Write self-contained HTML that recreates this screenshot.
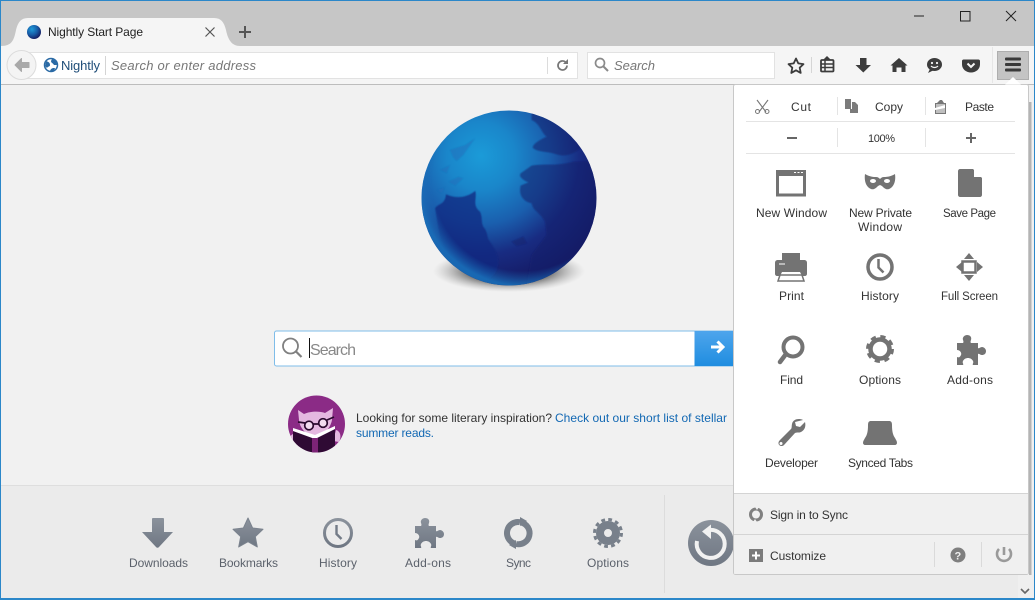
<!DOCTYPE html>
<html lang="en"><head><meta charset="utf-8"><title>Nightly Start Page</title>
<style>
html,body{margin:0;padding:0;width:1035px;height:600px;overflow:hidden;background:#f1f1f1}
svg{display:block}
text{font-family:"Liberation Sans",sans-serif;font-size:12px;fill:#222}
.i{font-style:italic;fill:#777;font-size:13px}
.b{fill:#5b616b;font-size:12px}
.m{fill:#333;font-size:12px}
</style></head><body>
<svg width="1035" height="600" viewBox="0 0 1035 600" xmlns="http://www.w3.org/2000/svg">
<defs>
<radialGradient id="g" cx="34%" cy="26%" r="78%"><stop offset="0" stop-color="#1b9bd8"/><stop offset=".25" stop-color="#1a86ca"/><stop offset=".5" stop-color="#1a5fae"/><stop offset=".72" stop-color="#182c82"/><stop offset="1" stop-color="#15175f"/></radialGradient>
<radialGradient id="rim" cx="58%" cy="40%" r="60%"><stop offset=".86" stop-color="#1a6ab5" stop-opacity="0"/><stop offset="1" stop-color="#1a74bd" stop-opacity=".85"/></radialGradient>
<radialGradient id="sh" cx="50%" cy="50%" r="50%"><stop offset=".55" stop-color="#555" stop-opacity=".8"/><stop offset="1" stop-color="#aaa" stop-opacity="0"/></radialGradient>
<linearGradient id="bi" x1="0" y1="0" x2="0" y2="1"><stop offset="0" stop-color="#8b929c"/><stop offset="1" stop-color="#6f7783"/></linearGradient>
<linearGradient id="go" x1="0" y1="0" x2="0" y2="1"><stop offset="0" stop-color="#4ea5ec"/><stop offset="1" stop-color="#1f8de0"/></linearGradient>
<radialGradient id="fav" cx="35%" cy="30%" r="75%"><stop offset="0" stop-color="#1f9ad8"/><stop offset=".55" stop-color="#175aa5"/><stop offset="1" stop-color="#14185c"/></radialGradient>
<filter id="bl" x="-10%" y="-10%" width="120%" height="120%"><feGaussianBlur stdDeviation="1.200"/></filter>
<clipPath id="cc"><circle cx="316.500" cy="424" r="28.500"/></clipPath>
<clipPath id="gc"><circle cx="509" cy="198" r="87.500"/></clipPath>
<path id="pz" d="M2 8H8C8 8 9 7 8 5C7 2 10 0 12 0C15 0 17 2 16 5C15 7 16 8 16 8H23V13C24 14 25 12 27 12C29 12 31 14 31 16C31 19 29 20 27 20C25 20 24 18 23 19V30H18C17 29 19 28 18 26C17 24 15 23 13 23C11 23 9 24 8 26C7 28 9 29 8 30H2V22C4 23 5 22 6 20C7 18 5 15 2 15Z"/>
</defs>

<!-- window / title -->
<rect width="1035" height="600" fill="#2b87c9"/>
<rect x="1" y="1" width="1033" height="45" fill="#c6c6c6"/>
<rect x="1" y="46" width="1033" height="38" fill="#f5f5f5"/>
<rect x="1" y="84" width="1033" height="1" fill="#bdbdbd"/>
<rect x="1" y="85" width="1033" height="400" fill="#f1f1f1"/>
<rect x="1" y="485" width="1033" height="113" fill="#ebebeb"/>
<rect x="1" y="485" width="1033" height="1" fill="#dedede"/>

<!-- tab -->
<path d="M1 46C12 46 14 40 16 30C18 22 21 18 28 18H214C221 18 224 22 226 30C228 40 232 46 240 46Z" fill="#f5f5f5"/>
<circle cx="34" cy="32" r="7" fill="url(#fav)"/>
<text x="48" y="36" textLength="95" style="font-size:12px">Nightly Start Page</text>
<path d="M205.500 27.500l9 9m0-9l-9 9" stroke="#555" stroke-width="1.200" fill="none"/>
<path d="M239 32h12M245 26v12" stroke="#555" stroke-width="2" fill="none"/>
<!-- window controls -->
<path d="M914 16h10" stroke="#222" stroke-width="1"/>
<rect x="960.500" y="11.500" width="9.500" height="9.500" fill="none" stroke="#222"/>
<path d="M1006 11l10 10m0-10l-10 10" stroke="#222" stroke-width="1" fill="none"/>

<!-- url bar -->
<rect x="22.500" y="52.500" width="555" height="26" fill="#fff" stroke="#e2e2e2"/>
<circle cx="21.500" cy="65" r="14.500" fill="#f4f4f4" stroke="#dcdcdc"/>
<path d="M15 65l6.500-6.500v4h7.500v5h-7.500v4z" fill="#a9a9a9" stroke="#a9a9a9" stroke-linejoin="round"/>
<circle cx="51" cy="65" r="6.500" fill="#fff" stroke="#2a6aa5" stroke-width="1.500"/>
<path d="M46 61c3 1 4 2 4 4s-2 1-3 3l-2-2zM52 59c3 1 5 3 5 6l-3 0c-1-2-3-2-3-4zM50 71c1-3 3-3 5-3l-1 3z" fill="#2a6aa5"/>
<text x="61" y="70" textLength="39" style="fill:#1f4d78;font-size:13px">Nightly</text>
<path d="M105.500 56v19" stroke="#d4d4d4"/>
<text x="111" y="70" textLength="145" class="i">Search or enter address</text>
<path d="M547.500 57v17" stroke="#dcdcdc"/>
<path d="M567 65.500a4.500 4.500 0 1 1-1.300-3.200" fill="none" stroke="#777" stroke-width="1.700"/><path d="M568 59v5h-5z" fill="#777"/>

<!-- search bar -->
<rect x="587.500" y="52.500" width="187" height="26" fill="#fff" stroke="#e2e2e2"/>
<circle cx="600" cy="63" r="4.500" fill="none" stroke="#8a8a8a" stroke-width="1.700"/><path d="M603.500 66.500l4.500 4.500" stroke="#8a8a8a" stroke-width="2"/>
<text x="614" y="70" textLength="41" class="i">Search</text>

<!-- toolbar icons -->
<path d="M796 58.500l2.300 4.900 5.200.7-3.800 3.600 1 5.200-4.700-2.600-4.700 2.600 1-5.200-3.800-3.600 5.200-.7z" fill="none" stroke="#3c3c3c" stroke-width="1.800" stroke-linejoin="round"/>
<path d="M811.500 57v16" stroke="#d5d5d5"/>
<rect x="821" y="60" width="12.500" height="11.500" rx="1" fill="none" stroke="#3c3c3c" stroke-width="1.800"/><path d="M825 59l2-2 2 2zM821 64h12M821 67.500h12M825 60v11" stroke="#3c3c3c" stroke-width="1.500" fill="#3c3c3c"/>
<path d="M860 58h6.500v7h4.500l-7.700 7.500-7.800-7.500h4.500z" fill="#3c3c3c"/>
<path d="M899 58l8.500 7.500h-2v6.500h-4v-4.500h-5v4.500h-4v-6.500h-2z" fill="#3c3c3c"/>
<ellipse cx="934.500" cy="64.500" rx="7.500" ry="6.500" fill="#3c3c3c"/><path d="M930 69l-2 4 5-2.500z" fill="#3c3c3c"/><circle cx="932" cy="63" r="1.100" fill="#f5f5f5"/><circle cx="937" cy="63" r="1.100" fill="#f5f5f5"/><path d="M931 66c2 2 5 2 7 0" fill="none" stroke="#f5f5f5" stroke-width="1.200"/>
<path d="M963.500 59.500h15c.8 0 1.500.7 1.500 1.500v3.500c0 4.500-4 8-9 8s-9-3.500-9-8v-3.500c0-.8.700-1.500 1.500-1.500z" fill="#3c3c3c"/><path d="M967.500 63.500l3.500 3.500 3.500-3.500" fill="none" stroke="#f5f5f5" stroke-width="2"/>
<path d="M992.500 47v36" stroke="#e6e6e6"/>
<rect x="997.500" y="51.500" width="31" height="28" fill="#c4c4c4" stroke="#aeaeae"/>
<rect x="1005" y="57.500" width="16" height="3" rx="1" fill="#3a3a3a"/><rect x="1005" y="63" width="16" height="3" rx="1" fill="#3a3a3a"/><rect x="1005" y="68.500" width="16" height="3" rx="1" fill="#3a3a3a"/>

<!-- globe -->
<ellipse cx="509" cy="271" rx="76" ry="21" fill="url(#sh)"/>
<circle cx="509" cy="198" r="87.500" fill="url(#g)"/>
<g clip-path="url(#gc)"><g transform="translate(400 95) scale(.3333)" filter="url(#bl)">
<path d="M105 340C115 325 135 330 138 298C170 312 200 308 226 288C232 310 215 330 240 350C250 370 240 385 255 402C265 420 260 430 270 440C292 470 305 505 285 535C262 565 225 565 195 540C150 500 120 445 115 400Z" fill="#162a80" opacity=".75"/>
<path d="M395 75C420 85 425 115 440 125C420 135 400 145 398 158C410 172 440 168 470 178C510 190 540 165 560 140L660 100V30H395Z" fill="#15206c" opacity=".55"/>
<path d="M395 212C430 205 470 215 520 200H660V630H370L395 480L440 420L435 380C420 350 400 350 395 325C370 320 355 300 362 272L385 262C370 255 355 245 362 235Z" fill="#15206c" opacity=".55"/>
<path d="M150 165l45-15 30-20-35 50-20 18-10-10zM120 225l30-15-10 25zM145 260l30-15 15 5-25 22zM110 285l25-8-10 18z" fill="#1e6db7" opacity=".45"/>
<path d="M335 440l35-15 10 20-30 8z" fill="#15206c" opacity=".5"/>
</g></g>
<circle cx="509" cy="198" r="87.500" fill="url(#rim)"/>

<!-- search -->
<rect x="274.500" y="331" width="460" height="35" rx="2" fill="#fff" stroke="#7fbde9"/>
<rect x="694.500" y="331" width="40" height="35" fill="url(#go)"/>
<path d="M711 347h11M717.500 341.500l5.500 5.500-5.500 5.500" fill="none" stroke="#fff" stroke-width="3"/>
<circle cx="290.500" cy="346" r="7.500" fill="none" stroke="#808080" stroke-width="1.800"/><path d="M296 351.500l5.500 5.500" stroke="#808080" stroke-width="2.200"/>
<path d="M309.500 338v20" stroke="#111"/>
<text x="310" y="355" textLength="46" style="font-size:16px;fill:#888">Search</text>

<!-- snippet -->
<circle cx="316.500" cy="424" r="28.500" fill="#8b2b86"/>
<g clip-path="url(#cc)">
<path d="M298 410L304 414C310 411 320 411 325 413L333 408L332 420C330 430 322 436 316 437C308 436 300 430 299 420Z" fill="#e4b8e0"/>
<path d="M293 434c-4 2-5 8-1 12l6-2zM336 430c4 1 6 6 3 12l-6-1z" fill="#e4b8e0"/>
<path d="M293 431l22 8 20-10v26h-42z" fill="#2f0a34"/>
<path d="M293 431l22 8 20-10v-3l-20 9-22-7z" fill="#fff"/>
<path d="M312 438h6v18h-6z" fill="#7d2477"/>
<circle cx="309" cy="425.500" r="4.300" fill="#f3dcf0" stroke="#2a0a2e" stroke-width="1.700"/><circle cx="323" cy="423" r="4.300" fill="#f3dcf0" stroke="#2a0a2e" stroke-width="1.700"/>
<path d="M298 422l7 1M327 420l7-3M313 424h6" stroke="#2a0a2e" stroke-width="1.700"/>
</g>
<text x="356" y="422" textLength="196" style="fill:#333">Looking for some literary inspiration?</text>
<text x="555" y="422" textLength="172" style="fill:#1268b3">Check out our short list of stellar</text>
<text x="356" y="437" textLength="78" style="fill:#1268b3">summer reads.</text>

<!-- launcher -->
<path d="M153 518h10c1 0 1 1 1 1v13h9l-14 15c-1 1-2 1-3 0l-14-15h10v-13c0-1 1-1 1-1z" fill="url(#bi)"/>
<path d="M248 518l4.600 10 10.400 1.300-7.700 7.300 2 10.400-9.300-5.300-9.300 5.300 2-10.400-7.700-7.300 10.400-1.300z" fill="url(#bi)" stroke="#7b838e" stroke-linejoin="round"/>
<circle cx="338" cy="533" r="13.500" fill="none" stroke="url(#bi)" stroke-width="3"/><path d="M336.500 525v9l5 5" fill="none" stroke="#737b87" stroke-width="2.400"/>
<use href="#pz" x="413" y="518" fill="url(#bi)"/>
<path d="M520 522.200A11 11 0 0 0 515 543.600" fill="none" stroke="#78808b" stroke-width="6"/><path d="M516 544A11 11 0 0 0 521 522.400" fill="none" stroke="#78808b" stroke-width="6"/>
<path d="M520 517l7 4-7 5zM516 549l-7-4 7-5z" fill="#78808b"/>
<circle cx="608" cy="533" r="8" fill="none" stroke="#78808b" stroke-width="8"/><circle cx="608" cy="533" r="13.500" fill="none" stroke="#78808b" stroke-width="3" stroke-dasharray="3.800 3.270"/>
<text x="129" y="567" textLength="59" class="b">Downloads</text>
<text x="219" y="567" textLength="59" class="b">Bookmarks</text>
<text x="319" y="567" textLength="38" class="b">History</text>
<text x="405" y="567" textLength="46" class="b">Add-ons</text>
<text x="506" y="567" textLength="25" class="b">Sync</text>
<text x="587" y="567" textLength="42" class="b">Options</text>
<path d="M664.500 495v98" stroke="#dcdcdc"/>
<circle cx="711" cy="543" r="23" fill="url(#bi)"/>
<path d="M709 530A14 14 0 1 1 697 541" fill="none" stroke="#f1f1f1" stroke-width="4"/><path d="M711 524.500V539L702 531.500Z" fill="#f1f1f1"/>

<!-- scrollbar behind panel -->
<rect x="1018" y="100" width="16" height="498" fill="#f0f0f0"/>
<rect x="1029" y="102" width="2.500" height="473" fill="#b4b4b4"/>
<rect x="1018" y="575" width="16" height="23" fill="#efefef"/>
<path d="M1021 589l4 4 4-4" fill="none" stroke="#666" stroke-width="1.600"/>

<!-- panel -->
<rect x="733.500" y="84.500" width="295" height="490" rx="2" fill="#fff" stroke="#c8c8c8"/>
<path d="M1005 84.600l8-7.600 8 7.600z" fill="#fff"/>
<path d="M734 493h294v80c0 1-1 1-1 1h-292c-1 0-1-1-1-1z" fill="#f0f0f0"/>
<path d="M734 493.500h294M734 534.500h294" stroke="#d4d4d4"/>
<path d="M746 121.500h269M746 153.500h269M837.500 97v18M925.500 97v18M837.500 128v19M925.500 128v19" stroke="#e4e4e4"/>

<path d="M757 100l9 12M768 100l-9 12" stroke="#777" stroke-width="1.100" fill="none"/><circle cx="757.500" cy="111.500" r="2" fill="none" stroke="#777"/><circle cx="767" cy="111.500" r="2" fill="none" stroke="#777"/>
<path d="M845 99h6v10h-6zM852 102h3l3 3v8h-8v-4h2z" fill="#7b7b7b"/>
<path d="M935.500 103.500h10v10h-10z" fill="#bfbfbf" stroke="#777"/><path d="M937 103l3-3 2 0 2 3z" fill="#777"/><path d="M935 108l10-3v3l-10 2z" fill="#fff"/>
<text x="791" y="111" textLength="20" class="m">Cut</text>
<text x="875" y="111" textLength="28" class="m">Copy</text>
<text x="965" y="111" textLength="29" class="m">Paste</text>
<path d="M787 138h10M966 138h10M971 133v10" stroke="#666" stroke-width="2"/>
<text x="868" y="142" textLength="27" class="m" style="font-size:11px">100%</text>

<!-- large icons -->
<rect x="777.500" y="171.500" width="27" height="23.500" fill="none" stroke="#737373" stroke-width="3"/><rect x="776" y="170" width="30" height="6" fill="#737373"/><path d="M794 172.500h2M797.500 172.500h2M801 172.500h2" stroke="#fff"/>
<path d="M865 174c5 3 9 3 11 3s3 1 4 2c1-1 2-2 4-2s6 0 11-3c1 7-1 13-6 15-3 1-5-1-7-3l-2-1-2 1c-2 2-4 4-7 3-5-2-7-8-6-15z" fill="#737373"/><ellipse cx="873" cy="181" rx="3" ry="2" fill="#fff"/><ellipse cx="887" cy="181" rx="3" ry="2" fill="#fff"/>
<path d="M960 169h13l9 9v17c0 1-1 2-2 2h-20c-1 0-2-1-2-2v-24c0-1 1-2 2-2z" fill="#737373"/><path d="M974 169l8 8h-8z" fill="#fff"/>
<path d="M782 253h18v8h-18z" fill="#737373"/><path d="M778 260h26c2 0 3 1 3 3v11c0 1-1 2-2 2h-3l-2-4h-18l-2 4h-3c-1 0-2-1-2-2v-11c0-2 1-3 3-3z" fill="#737373"/><path d="M780 275h22l2 6h-26z" fill="#fff" stroke="#737373" stroke-width="1.500"/><path d="M779 264h6" stroke="#fff"/>
<circle cx="880" cy="267" r="12" fill="none" stroke="#737373" stroke-width="3.500"/><path d="M878.500 259v8.500l5 5" fill="none" stroke="#737373" stroke-width="2.500"/>
<path d="M969 253l5 6h-10zM969 281l5-6h-10zM956 267l6-5v10zM983 267l-6-5v10z" fill="#737373"/><rect x="962.500" y="261.500" width="13" height="11" fill="none" stroke="#737373" stroke-width="2.500"/>
<circle cx="793" cy="347" r="9.500" fill="none" stroke="#737373" stroke-width="4"/><path d="M786 354l-6 8" stroke="#737373" stroke-width="4.500" stroke-linecap="round"/>
<circle cx="880" cy="349" r="9.500" fill="none" stroke="#737373" stroke-width="4.500"/><circle cx="880" cy="349" r="12" fill="none" stroke="#737373" stroke-width="4" stroke-dasharray="5 4.420"/>
<use href="#pz" x="955" y="335" fill="#737373"/>
<path d="M803 420c-4-2-10-1-11 4-.5 2 0 4-1 5l-11 11c-4 4 1 8 4 5l11-12c2-1 4 0 6-1 4-2 5-6 4-10l-5 5-4-1-1-4z" fill="#737373"/><circle cx="781" cy="443.500" r="1.500" fill="#fff"/>
<path d="M871 421h18c2 0 3 1 3 4 0 7 1 10 3 13 1 2 2 3 2 5 0 1-1 2-2 2h-30c-1 0-2-1-2-2 0-2 1-3 2-5 2-3 3-6 3-13 0-3 1-4 3-4z" fill="#737373"/>

<text x="756" y="217" textLength="71" class="m">New Window</text>
<text x="849" y="217" textLength="63" class="m">New Private</text>
<text x="858" y="231" textLength="44" class="m">Window</text>
<text x="943" y="217" textLength="53" class="m" style="font-size:11.500px">Save Page</text>
<text x="779" y="300" textLength="25" class="m">Print</text>
<text x="861" y="300" textLength="38" class="m">History</text>
<text x="941" y="300" textLength="57" class="m" style="font-size:11.500px">Full Screen</text>
<text x="780" y="384" textLength="23" class="m">Find</text>
<text x="859" y="384" textLength="42" class="m">Options</text>
<text x="947" y="384" textLength="46" class="m">Add-ons</text>
<text x="765" y="467" textLength="53" class="m">Developer</text>
<text x="848" y="467" textLength="65" class="m">Synced Tabs</text>

<!-- footer -->
<circle cx="756" cy="514.500" r="5.500" fill="none" stroke="#808080" stroke-width="3"/><path d="M755 507l4 0-2 3zM757 522l-4 0 2-3z" fill="#f0f0f0"/>
<text x="770" y="519" textLength="78" class="m">Sign in to Sync</text>
<rect x="749" y="549" width="14" height="13" fill="#7b7b7b"/><path d="M752 555.500h8M756 551.500v8" stroke="#fff" stroke-width="2"/>
<text x="770" y="560" textLength="56" class="m">Customize</text>
<path d="M934.500 542v25M981.500 542v25" stroke="#dadada"/>
<circle cx="958" cy="555" r="7.500" fill="#7f7f7f"/>
<text x="954.500" y="559.500" style="font-size:11px;font-weight:bold;fill:#f0f0f0">?</text>
<path d="M999 549a7 7 0 1 0 10 0" fill="none" stroke="#9a9a9a" stroke-width="2.600"/><path d="M1004 547v8" stroke="#9a9a9a" stroke-width="2.600"/>
</svg>
</body></html>
